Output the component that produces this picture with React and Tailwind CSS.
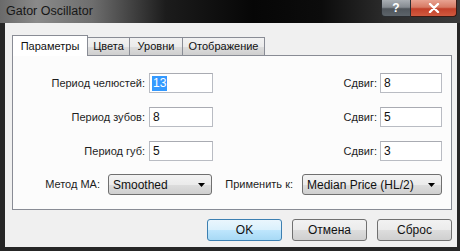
import React from 'react';

const font = { fontFamily: '"Liberation Sans", Arial, sans-serif' };

const Field = ({ value, selected, className = '' }) => (
  <div
    className={`h-[20px] bg-white border border-[#b9bcc3] border-t-[#a9abb2] flex items-center pl-[2px] text-[12px] text-[#111] ${className}`}
  >
    {selected ? <span className="bg-[#3399ff] text-white px-[1px] leading-[15px]">{value}</span> : <span className="pl-[1px]">{value}</span>}
  </div>
);

const Select = ({ value, className = '' }) => (
  <div
    className={`h-[21px] rounded-[3px] border border-[#707070] bg-[linear-gradient(to_bottom,#f3f3f3_0%,#ebebeb_50%,#dddddd_51%,#cfcfcf_100%)] flex items-center pl-[4px] pr-[6px] text-[12px] text-[#111] ${className}`}
  >
    <span className="flex-1">{value}</span>
    <svg width="7" height="4" viewBox="0 0 7 4">
      <path d="M0 0h7L3.5 4z" fill="#000" />
    </svg>
  </div>
);

const Button = ({ children, primary }) => (
  <div
    className={`w-[75px] h-[22px] rounded-[3px] border flex items-center justify-center text-[12px] text-[#111] ${
      primary
        ? 'border-[#3c7fb1] bg-[linear-gradient(to_bottom,#eaf6fd_0%,#d9f0fc_50%,#bee6fd_51%,#a7d9f5_100%)]'
        : 'border-[#707070] bg-[linear-gradient(to_bottom,#f2f2f2_0%,#ebebeb_50%,#dddddd_51%,#cfcfcf_100%)]'
    }`}
  >
    {children}
  </div>
);

const Row = ({ label, value, shift, selected }) => (
  <div className="flex items-center h-[20px]">
    <div className="w-[136px] text-right pr-[4px] text-[11px] text-[#1e1e1e]">{label}</div>
    <Field value={value} selected={selected} className="w-[64px]" />
    <div className="flex-1" />
    <div className="text-[11px] text-[#1e1e1e] pr-[3px]">Сдвиг:</div>
    <Field value={shift} className="w-[62px]" />
  </div>
);

export default function App() {
  const tabs = [
    { name: 'Цвета', w: 'w-[42px]' },
    { name: 'Уровни', w: 'w-[53px]' },
    { name: 'Отображение', w: 'w-[82px]' },
  ];

  return (
    <div className="w-[460px] h-[251px] flex flex-col bg-[#262626] overflow-hidden" style={font}>
      {/* title bar */}
      <div className="h-[23px] flex items-start bg-[linear-gradient(to_right,#6a6a6a_0%,#8a8a8a_8%,#6e6e6e_20%,#1c1c1c_36%,#060606_55%,#0c0c0c_70%,#2c2c2c_84%,#3a3a3a_100%)]">
        <div className="h-[23px] flex items-center pl-[6px] text-[12.5px] text-[#161616]">Gator Oscillator</div>
        <div className="flex-1" />
        <div className="flex mr-[3px]">
          <div className="w-[30px] h-[17px] rounded-bl-[4px] border border-t-0 border-[#2a2d31] bg-[linear-gradient(to_bottom,#a9aeb3_0%,#858b91_45%,#4f555b_55%,#5d646a_100%)] flex items-center justify-center text-white text-[12px] font-bold">
            ?
          </div>
          <div className="w-[46px] h-[17px] rounded-br-[4px] border border-t-0 border-l-0 border-[#3a1a14] bg-[linear-gradient(to_bottom,#e8a291_0%,#d77a64_45%,#c3402a_55%,#d15a3f_100%)] flex items-center justify-center">
            <svg width="12" height="10" viewBox="0 0 12 10">
              <path d="M2 1l8 8M10 1L2 9" stroke="#fff" strokeWidth="2.4" strokeLinecap="round" />
            </svg>
          </div>
        </div>
      </div>

      {/* client area */}
      <div className="flex-1 ml-[5px] mr-[3px] mb-[4px] bg-[#f0f0f0] flex flex-col pt-[12px]">
        {/* tabs */}
        <div className="flex items-end ml-[7px] h-[20px]">
          <div className="w-[76px] h-[21px] -mb-px relative z-10 bg-white border border-b-0 border-[#898c95] flex items-center justify-center text-[11px] text-[#111]">
            Параметры
          </div>
          {tabs.map((t) => (
            <div
              key={t.name}
              className={`${t.w} h-[18px] border-t border-r border-[#898c95] bg-[linear-gradient(to_bottom,#f2f2f2_0%,#ebebeb_50%,#dddddd_51%,#cfcfcf_100%)] flex items-center justify-center text-[11px] text-[#111]`}
            >
              {t.name}
            </div>
          ))}
        </div>

        {/* panel */}
        <div className="ml-[7px] mr-[5px] h-[155px] border border-[#898c95] bg-[#fcfcfc] flex flex-col gap-[14px] pt-[17px] pr-[9px]">
          <Row label="Период челюстей:" value="13" shift="8" selected />
          <Row label="Период зубов:" value="8" shift="5" />
          <Row label="Период губ:" value="5" shift="3" />
          <div className="flex items-center h-[21px] -mt-[1px]">
            <div className="w-[87px] text-right text-[11px] text-[#1e1e1e]">Метод MA:</div>
            <Select value="Smoothed" className="ml-[8px] w-[104px]" />
            <div className="flex-1" />
            <div className="text-[11px] text-[#1e1e1e] mr-[9px]">Применить к:</div>
            <Select value="Median Price (HL/2)" className="w-[140px]" />
          </div>
        </div>

        {/* buttons */}
        <div className="flex justify-end gap-[10px] mt-[9px] pr-[5px]">
          <Button primary>OK</Button>
          <Button>Отмена</Button>
          <Button>Сброс</Button>
        </div>
      </div>
    </div>
  );
}
